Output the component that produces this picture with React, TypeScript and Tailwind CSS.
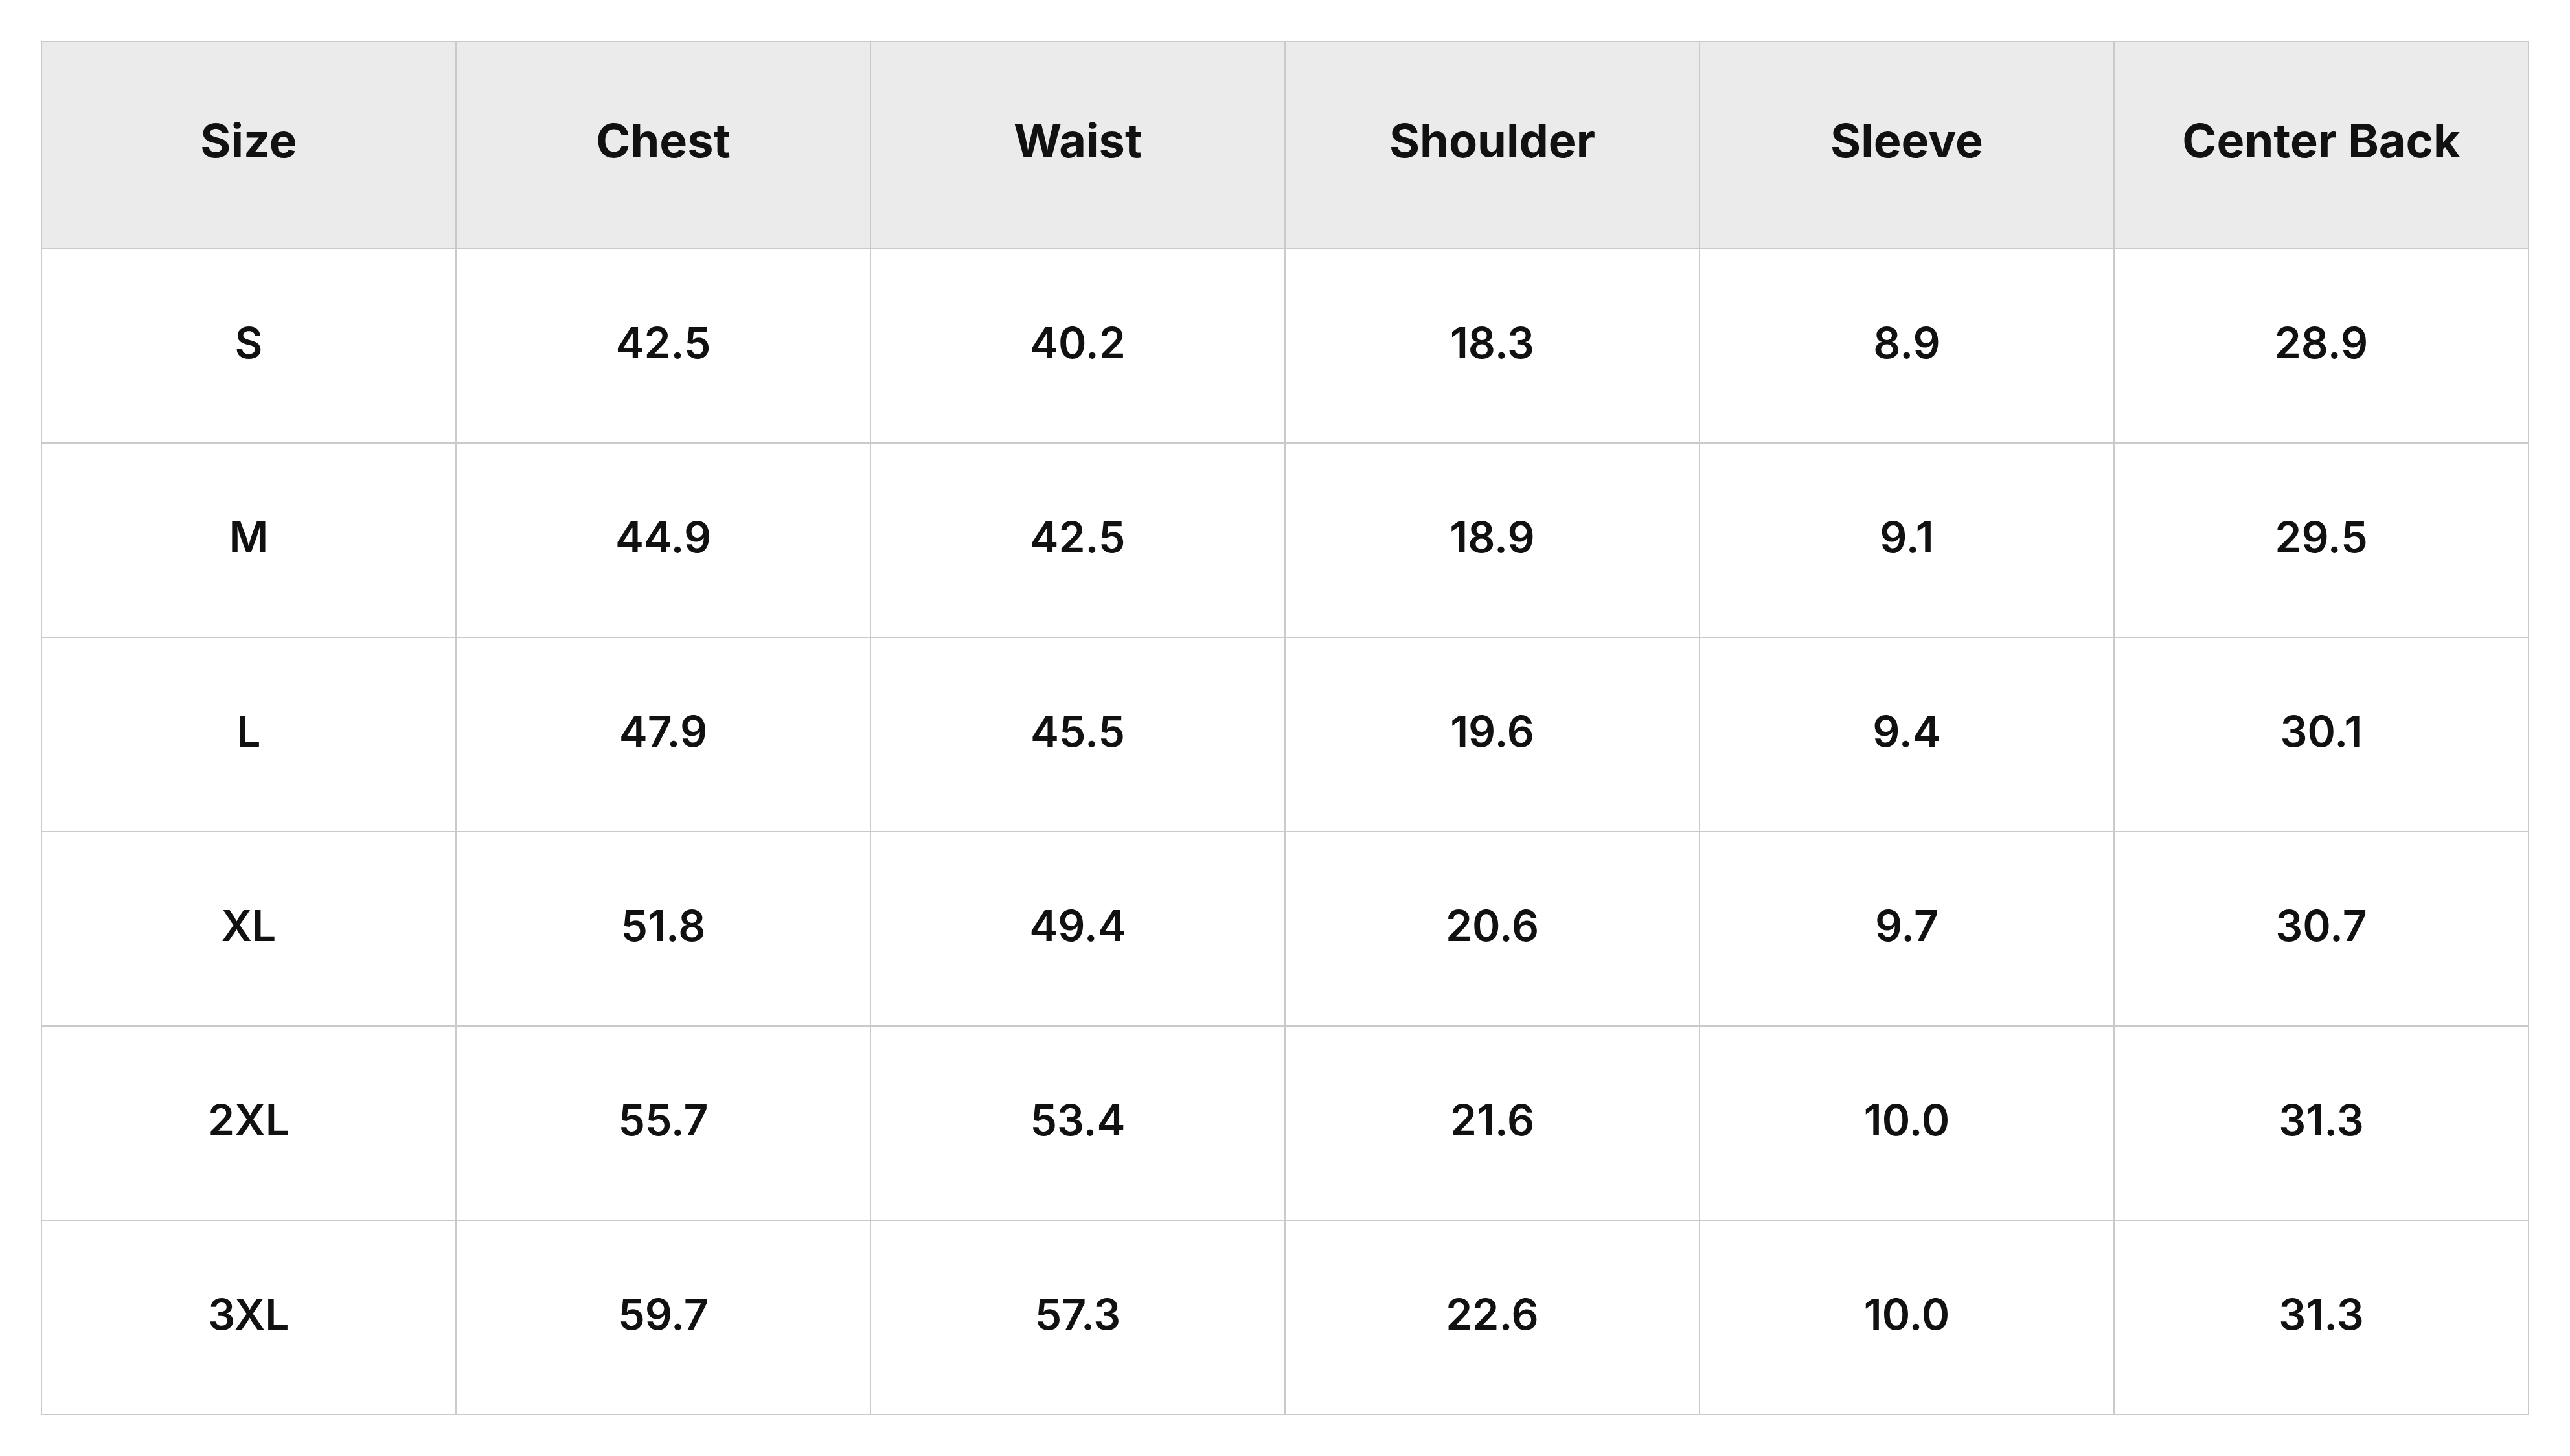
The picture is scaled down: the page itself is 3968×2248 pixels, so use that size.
const headers = ["Size", "Chest", "Waist", "Shoulder", "Sleeve", "Center Back"];

const rows = [
  ["S", "42.5", "40.2", "18.3", "8.9", "28.9"],
  ["M", "44.9", "42.5", "18.9", "9.1", "29.5"],
  ["L", "47.9", "45.5", "19.6", "9.4", "30.1"],
  ["XL", "51.8", "49.4", "20.6", "9.7", "30.7"],
  ["2XL", "55.7", "53.4", "21.6", "10.0", "31.3"],
  ["3XL", "59.7", "57.3", "22.6", "10.0", "31.3"],
];

export default function App() {
  return (
    <div className="min-h-screen bg-white p-[63px] font-['Inter',sans-serif] text-[#111111]">
      <table className="w-[3842px] table-fixed border-collapse">
        <thead>
          <tr className="bg-[#ebebeb]">
            {headers.map((h) => (
              <th
                key={h}
                className="h-[320px] border-2 border-[#cacaca] pb-[14px] text-center align-middle text-[72px] font-bold"
              >
                {h}
              </th>
            ))}
          </tr>
        </thead>
        <tbody>
          {rows.map((row) => (
            <tr key={row[0]}>
              {row.map((cell, i) => (
                <td
                  key={i}
                  className="h-[300px] border-2 border-[#cacaca] pb-[10px] text-center align-middle text-[66px] font-semibold"
                >
                  {cell}
                </td>
              ))}
            </tr>
          ))}
        </tbody>
      </table>
    </div>
  );
}
